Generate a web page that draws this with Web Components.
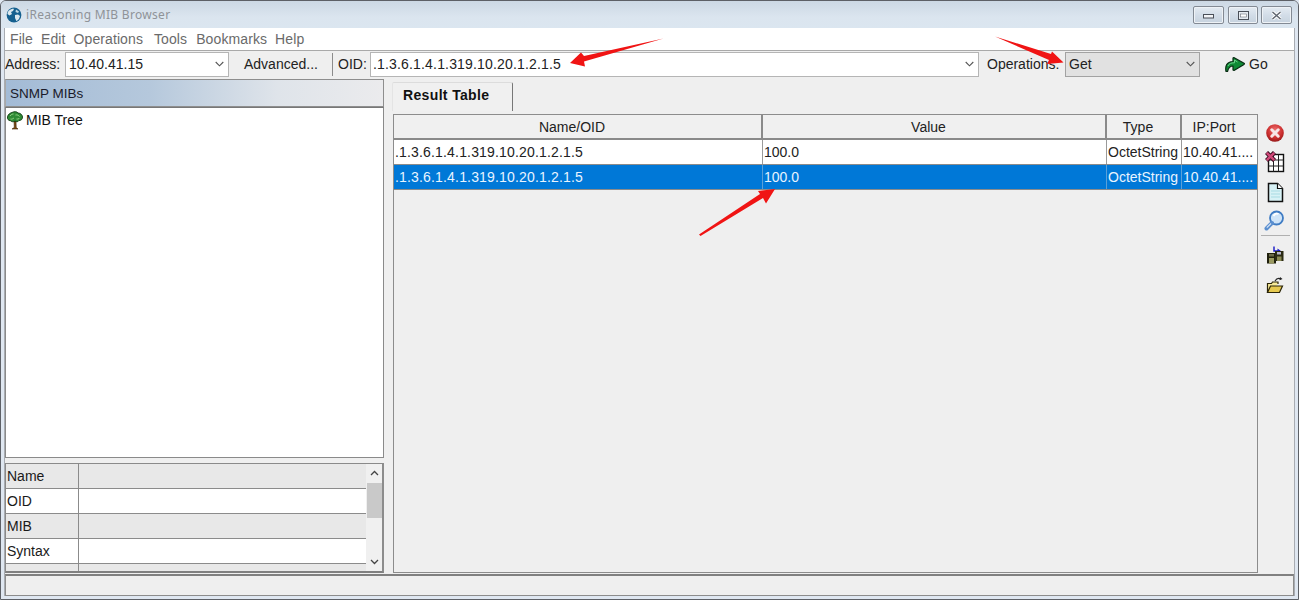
<!DOCTYPE html>
<html><head><meta charset="utf-8"><style>
html,body{margin:0;padding:0;background:#dfe7f1}
body{width:1299px;height:600px;overflow:hidden;font:14px "Liberation Sans",Arial,sans-serif;color:#111}
</style></head><body>
<mib-window>
  <mib-titlebar slot="title"></mib-titlebar>
  <mib-menubar slot="menu"></mib-menubar>
  <mib-toolbar slot="toolbar"></mib-toolbar>
  <mib-left slot="left"></mib-left>
  <mib-right slot="right"></mib-right>
  <mib-status slot="status"></mib-status>
  <mib-arrows slot="over"></mib-arrows>
</mib-window>
<script>
function def(name, html){
  customElements.define(name, class extends HTMLElement{
    constructor(){super();this.attachShadow({mode:'open'}).innerHTML=html;}
  });
}
const chev='<svg width="9" height="6" viewBox="0 0 9 6"><path d="M.7 1l3.800 3.800L8.300 1" fill="none" stroke="#555" stroke-width="1.100"/></svg>';
const OID='<span style="letter-spacing:.17px">.1.3.6.1.4.1.319.10.20.1.2.1.5</span>';

def('mib-window',`<style>
:host{display:flex;flex-direction:column;width:1299px;height:600px;box-sizing:border-box;position:relative;background:#dfe7f1;border:1px solid #5d6066;border-radius:6px 6px 0 0;overflow:hidden}
.body{display:flex;flex-direction:column;flex:1;margin:0 3px 3px 3px;background:#efefef;min-height:0;border-left:1px solid #a8acb2;border-right:1px solid #a8acb2}
.main{display:flex;flex:1;min-height:0}
</style><slot name="title"></slot><div class="body"><slot name="menu"></slot><slot name="toolbar"></slot><div class="main"><slot name="left"></slot><slot name="right"></slot></div><slot name="status"></slot></div><slot name="over"></slot>`);

def('mib-titlebar',`<style>
:host{display:flex;align-items:center;height:27px;flex:none;background:linear-gradient(#ccd8e4,#dbe5ef 60%,#dbe6f0);padding-left:5px;color:#8f9398;font:12px "Noto Sans","Liberation Sans",sans-serif;letter-spacing:.3px}
svg{flex:none;margin-right:4px}
.s{flex:1;white-space:nowrap}
.b{display:flex;margin-right:6px;margin-top:1px}
.c{height:18px;box-sizing:border-box;border:1px solid #838a94;border-radius:2px;background:linear-gradient(#e4ebf2,#d3dde8 50%,#c6d2de);box-shadow:inset 0 0 0 1px #eef2f6;display:flex;align-items:center;justify-content:center}
.c svg{margin:0}
</style>
<svg width="16" height="16" viewBox="0 0 16 16"><circle cx="8" cy="8" r="7.400" fill="#15608f"/><path d="M3 3.500c2-1.500 4-2 5-1.500L7 4 5 5 6 7 3.500 8.500 1.500 7C1.500 5.500 2 4.500 3 3.500zM9 8l3-.5 2 1.500-1 3-2.500 2.200L9 11z" fill="#dbe8ee"/><path d="M10 2.500l3 2-1 1.500-2.500-1z" fill="#bcd6e2"/></svg>
<span class="s">iReasoning MIB Browser</span>
<div class="b"><div class="c" style="width:31px"><svg width="11" height="5" style="margin-top:3px"><rect x=".5" y=".5" width="10" height="3.500" fill="#f2f4f7" stroke="#4a4f58"/></svg></div><div class="c" style="width:30px;margin-left:4px"><svg width="11" height="9"><rect x=".5" y=".5" width="10" height="8" fill="#e6ebf1" stroke="#4a4f58"/><rect x="2.500" y="3" width="6" height="3" fill="#fff" stroke="#6a6f78" stroke-width=".6"/></svg></div><div class="c" style="width:31px;margin-left:3px"><svg width="11" height="9"><path d="M1.500 1l8 7M9.500 1l-8 7" stroke="#fff" stroke-width="3.400"/><path d="M1.500 1l8 7M9.500 1l-8 7" stroke="#5f6670" stroke-width="1.500"/></svg></div></div>`);

def('mib-menubar',`<style>
:host{display:flex;align-items:center;height:22px;flex:none;background:#fff;padding-left:5px;gap:8px;color:#6a6a6a;font-size:14px;letter-spacing:.1px;border-bottom:1px solid #a9a9a9}
</style><span>File</span><span>Edit</span><span style="margin-right:3px">Operations</span><span style="margin-right:1px">Tools</span><span>Bookmarks</span><span>Help</span>`);

def('mib-combo',`<style>
:host{display:flex;align-items:center;box-sizing:border-box;height:25px;border:1px solid #b5b5b5;background:#fff;padding:0 4px 0 3px;font-size:14px;color:#222}
:host([gray]){background:#e1e1e1;border-color:#a2a2a2}
.t{flex:1;white-space:nowrap;margin-top:-1px}svg{flex:none}
</style><span class="t"><slot></slot></span>${chev}`);

def('mib-toolbar',`<style>
:host{display:flex;align-items:center;height:28px;flex:none;box-sizing:border-box;padding:0 0 2px 0;color:#222}
span{white-space:nowrap}
.sep{width:1px;height:23px;background:#8c8c8c}
</style>
<span style="margin-left:0;width:60px">Address:</span>
<mib-combo style="width:164px">10.40.41.15</mib-combo>
<span style="margin-left:15px;width:88px">Advanced...</span>
<div class="sep"></div>
<span style="margin-left:5px;width:32px">OID:</span>
<mib-combo style="width:609px"><span style="letter-spacing:.17px;margin-left:-1px">.1.3.6.1.4.1.319.10.20.1.2.1.5</span></mib-combo>
<span style="margin-left:8px;width:78px">Operations:</span>
<mib-combo gray style="width:135px">Get</mib-combo>
<svg style="margin-left:25px;flex:none" width="20" height="16" viewBox="0 0 20 16"><path d="M1 15.500C0 10 1.500 6 8 5.500V2l.8-.5L19.500 7.500 19 8.500 9 14.500l-1-.5V10C5 10 3.500 11.500 2.500 15.500z" fill="#0f8a35" stroke="#0a2c14" stroke-width="1.200" stroke-linejoin="round"/><path d="M3 10C4 7.500 6 6.800 9.500 6.800V4l3 2" fill="none" stroke="#6cd48b" stroke-width="1"/></svg>
<span style="margin-left:4px">Go</span>`);

def('mib-left',`<style>
:host{display:flex;flex-direction:column;width:379px;flex:none;box-sizing:border-box}
.h{height:28px;flex:none;box-sizing:border-box;border:1px solid #8e8e8e;border-left:1px solid #a8a8a8;background:linear-gradient(90deg,#a3bbd6,#b5c8dc 38%,#dfe4ea 72%,#ebebed);display:flex;align-items:center;padding-left:4px;font-size:13.5px;color:#1a1a2a}
.t{height:351px;flex:none;box-sizing:border-box;background:#fff;border:1px solid #8a8a8a;border-top:1px solid #777;display:flex;align-items:flex-start;padding:3px 0 0 0;}
.t svg{flex:none}.t span{margin:1px 0 0 2px}
.g{height:5px;flex:none}
</style>
<div class="h">SNMP MIBs</div>
<div class="t"><svg width="18" height="19" viewBox="0 0 18 19"><path d="M8 10l.3 6.500L6 18h6l-1.800-1.500L10 10z" fill="#7a4a12" stroke="#3c2406" stroke-width=".6"/><path d="M6 1.500C8 .2 11 .5 12 2c2.500 0 4.500 2 4.500 4 0 2.500-1.500 3.500-3.500 3.500-1 1.500-2.500 1.500-4 .6-1.500 1-3.500 .8-4.500-.4C2.500 9.700 1 8 1.500 6c.3-2.500 2.500-4 4.500-4.500z" fill="#2f8a35" stroke="#0e3a12" stroke-width=".9"/><path d="M4 5c1-1.500 2.500-2 3.500-2M9.500 4c1.500-.4 3 .2 4 1.500M4.500 8C6 8.500 7 7.500 8 7M10.500 8c1 .2 2.500 0 3-1" stroke="#9fdc8f" stroke-width=".9" fill="none"/></svg><span>MIB Tree</span></div>
<div class="g"></div>
<mib-props></mib-props>`);

def('mib-props',`<style>
:host{flex:none;height:110px;box-sizing:border-box;border:1px solid #8a8a8a;border-bottom:2px solid #808080;border-right:2px solid #8c8c8c;display:flex;overflow:hidden;background:#efefef;width:379px}
.g{width:360px;flex:none;display:grid;grid-template-columns:73px 1fr;grid-auto-rows:25px;align-content:start}
.g>div{box-sizing:border-box;border-bottom:1px solid #8b8b8b;padding:0 0 0 1px;line-height:24px;white-space:nowrap;overflow:hidden;font-size:14px;color:#1a1a1a}
.g>div:nth-child(odd){border-right:1px solid #8b8b8b}
.a{background:#e8e8e8}.b{background:#fff}
.s{flex:1;display:flex;flex-direction:column;align-items:center;padding-top:6px;box-sizing:border-box;background:#f0f0f0}
.th{width:15px;height:35px;background:#c9c9c9;margin-top:7px}
.sp{flex:1}
</style>
<div class="g">
<div class="a">Name</div><div class="a"></div>
<div class="b">OID</div><div class="b"></div>
<div class="a">MIB</div><div class="a"></div>
<div class="b">Syntax</div><div class="b"></div>
<div class="a">Access</div><div class="a"></div>
</div>
<div class="s"><svg width="9" height="6" viewBox="0 0 9 6"><path d="M1 5l3.500-3.500L8 5" fill="none" stroke="#444" stroke-width="1.300"/></svg><div class="th"></div><div class="sp"></div><svg width="9" height="6" viewBox="0 0 9 6" style="margin-bottom:6px"><path d="M1 1l3.500 3.500L8 1" fill="none" stroke="#444" stroke-width="1.300"/></svg></div>`);

def('mib-right',`<style>
:host{display:flex;flex-direction:column;flex:1;min-width:0;padding-left:8px;box-sizing:border-box;padding-top:3px}
.tabs{display:flex;height:29px;flex:none}
.tab{width:121px;box-sizing:border-box;border-right:1px solid #777;border-top:1px solid #dcdcdc;border-left:1px solid #e4e4e4;border-radius:2px 2px 0 0;background:#f0f0f0;font-weight:bold;font-size:14px;letter-spacing:.35px;color:#111;display:flex;align-items:center;padding:0 0 5px 10px}
.c{display:flex;flex:1;min-height:0;margin-top:3px;margin-bottom:1px;padding-left:1px}
</style><div class="tabs"><div class="tab">Result Table</div></div>
<div class="c"><mib-results></mib-results><mib-tools></mib-tools></div>`);

def('mib-results',`<style>
:host{display:flex;flex-direction:column;width:865px;flex:none;box-sizing:border-box;border:1px solid #8c8c8c;background:#efefef}
.r{display:grid;grid-template-columns:369px 344px 75px 1fr;flex:none}
.h{border-bottom:2px solid #8a8a8a;height:23px;background:#f0f0f0}
.h div{text-align:center;line-height:24px;border-right:2px solid #8a8a8a;font-size:14px;color:#222;padding-right:11px}
.h div:last-child{border-right:0}
.d{height:24px;background:#fff;border-bottom:1px solid #8b8b8b;line-height:24px;color:#222}
.d div{padding-left:1px;border-right:1px solid #9a9a9a;white-space:nowrap;overflow:hidden}
.d div:last-child{border-right:0}
.d.sel{background:#0078d7;color:#e8f4ff}.d.sel div{border-color:#5aa0d8}
</style>
<div class="r h"><div>Name/OID</div><div>Value</div><div>Type</div><div>IP:Port</div></div>
<div class="r d"><div>${OID}</div><div>100.0</div><div>OctetString</div><div>10.40.41....</div></div>
<div class="r d sel"><div>${OID}</div><div>100.0</div><div>OctetString</div><div>10.40.41....</div></div>`);

def('mib-tools',`<style>
:host{display:flex;flex-direction:column;align-items:center;width:34px;flex:none;box-sizing:border-box;padding:9px 0 0 0}
.i{width:20px;height:20px;flex:none;display:block}
.sp{width:29px;height:1px;background:#b0b0b0;margin:3px 0 9px 1px}
</style>
<svg class="i" viewBox="0 0 20 20"><defs><radialGradient id="rg" cx=".5" cy=".35" r=".7"><stop offset="0" stop-color="#f07272"/><stop offset=".6" stop-color="#cc2f2f"/><stop offset="1" stop-color="#8c1515"/></radialGradient></defs><circle cx="10" cy="10" r="8.800" fill="url(#rg)"/><path d="M6.800 6.800l6.400 6.400M13.200 6.800l-6.400 6.400" stroke="#f6e6e6" stroke-width="3" stroke-linecap="round"/></svg>
<svg class="i" style="margin-top:8px;height:22px" viewBox="0 0 20 22"><rect x="3.500" y="3.500" width="15" height="17" fill="#fff" stroke="#111" stroke-width="1.400"/><path d="M3.500 9h15M3.500 15h15M8.500 3.500v17M13.500 3.500v17" stroke="#222" stroke-width="1"/><path d="M1.500 1.500l8 8M9.500 1.500l-8 8" stroke="#3a0a20" stroke-width="4.400"/><path d="M1.800 1.800l7.400 7.400M9.200 1.800l-7.400 7.400" stroke="#d04878" stroke-width="2.400"/></svg>
<svg class="i" style="margin-top:9px;height:21px" viewBox="0 0 20 21"><path d="M3.500 1.500h9l5 5v13h-14z" fill="#d8f2f6" stroke="#111" stroke-width="1.500"/><path d="M12.500 1.500v5h5" fill="#fff" stroke="#111" stroke-width="1.200"/><path d="M6 9h9M6 12h9M6 15h9" stroke="#a8dbe3" stroke-width="1"/></svg>
<svg class="i" style="margin-top:7px;height:22px;margin-left:-2px" viewBox="0 0 20 22"><circle cx="12.500" cy="8" r="6.500" fill="#cfe4f8" stroke="#3f7cc4" stroke-width="1.800"/><path d="M9.500 6c1-2 3-3 5-2" stroke="#fff" stroke-width="1.800" fill="none"/><path d="M8 13L2.500 18.500" stroke="#5b8fcf" stroke-width="4" stroke-linecap="round"/><path d="M7 13.500L2.800 17.700" stroke="#d6e5f7" stroke-width="1.100"/></svg>
<div class="sp" style="margin-top:3px"></div>
<svg class="i" viewBox="0 0 20 20"><path d="M9 1.500v4.500h6" fill="none" stroke="#1818c8" stroke-width="1.400"/><path d="M12.500 3.500l3.500 2.500-3.500 2.500z" fill="#1818c8"/><rect x="2" y="8" width="9" height="10.500" fill="#1f1f0c"/><rect x="10" y="6" width="8.500" height="10" fill="#2a2a14"/><rect x="4" y="13" width="5" height="5.500" fill="#9a9a62"/><rect x="4" y="9" width="5" height="2.500" fill="#6a6a48"/><rect x="12" y="7" width="4" height="2.500" fill="#b8b8cc"/><rect x="12" y="11.500" width="4.500" height="4.500" fill="#8a8a54"/></svg>
<svg class="i" style="margin-top:11px" viewBox="0 0 20 20"><path d="M2.500 16.500V7.500h4l1-1.500h5.500v2" fill="#f7ea98" stroke="#2a2408" stroke-width="1.200"/><path d="M2.500 16.500L5.500 10h12l-3 6.500z" fill="#e6c94f" stroke="#2a2408" stroke-width="1.200"/><path d="M10 5c1.500-2.500 4-3 6-2" fill="none" stroke="#222" stroke-width="1.200"/><path d="M15 1l2.500 2-3 1.200z" fill="#222"/></svg>`);

def('mib-status',`<style>
:host{display:block;flex:none;height:22px;box-sizing:border-box;border:1px solid #8c8c8c;border-top:2px solid #808080;background:#efefef}
</style>`);

def('mib-arrows',`<style>
:host{position:absolute;left:-1px;top:-1px;width:1299px;height:600px;pointer-events:none}
svg{display:block}
</style><svg width="1299" height="600" viewBox="0 0 1299 600"><g fill="#f01414">
<path d="M663.500 38.500L584 56l-3-3.500L570 63l15 3.500-1-5z"/>
<path d="M995 36.500l56 17.500 1-2.500 11.500 11-16.500 1.500 2-4-54-23.500z"/>
<path d="M699 234.500L760 194l-2-3 17-2-9 14.500-3-5.500-62.500 38z"/>
</g></svg>`);
</script>
</body></html>
